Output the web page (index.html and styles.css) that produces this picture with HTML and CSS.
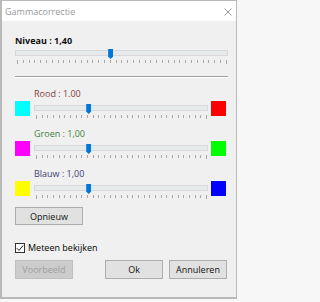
FILE: index.html
```html
<!DOCTYPE html>
<html lang="nl">
<head>
<meta charset="utf-8">
<title>Gammacorrectie</title>
<link rel="stylesheet" href="styles.css">
</head>
<body>
<div class="window">
  <div class="titlebar">
    <span class="title">Gammacorrectie</span>
    <svg class="close" width="8" height="8" viewBox="0 0 8 8"><path d="M0.5 0.5L7.5 7.5M7.5 0.5L0.5 7.5" stroke="#8c8c8c" stroke-width="0.9" fill="none"/></svg>
  </div>
  <div class="content">
    <div class="level">Niveau : 1,40</div>
    <div class="slider slider-main" style="--pos: 0.448">
      <div class="track"></div>
      <div class="ticks"></div>
      <div class="thumb"></div>
    </div>
    <div class="sep"></div>
    <div class="channels">
      <div class="channel">
        <div class="ch-label rood">Rood : 1.00</div>
        <div class="ch-row">
          <span class="swatch cyan"></span>
          <div class="slider slider-ch" style="--pos: 0.310">
            <div class="track"></div>
            <div class="ticks"></div>
            <div class="thumb"></div>
          </div>
          <span class="swatch red"></span>
        </div>
      </div>
      <div class="channel">
        <div class="ch-label groen">Groen : 1,00</div>
        <div class="ch-row">
          <span class="swatch magenta"></span>
          <div class="slider slider-ch" style="--pos: 0.310">
            <div class="track"></div>
            <div class="ticks"></div>
            <div class="thumb"></div>
          </div>
          <span class="swatch green"></span>
        </div>
      </div>
      <div class="channel">
        <div class="ch-label blauw">Blauw : 1,00</div>
        <div class="ch-row">
          <span class="swatch yellow"></span>
          <div class="slider slider-ch" style="--pos: 0.310">
            <div class="track"></div>
            <div class="ticks"></div>
            <div class="thumb"></div>
          </div>
          <span class="swatch blue"></span>
        </div>
      </div>
    </div>
    <button class="btn btn-reset">Opnieuw</button>
    <label class="check-row">
      <span class="checkbox"><svg width="8" height="8" viewBox="0 0 8 8"><path d="M0.8 4.2L3 6.4L7.2 1.4" stroke="#222" stroke-width="1" fill="none"/></svg></span>
      <span>Meteen bekijken</span>
    </label>
    <div class="actions">
      <button class="btn btn-preview" disabled>Voorbeeld</button>
      <button class="btn">Ok</button>
      <button class="btn">Annuleren</button>
    </div>
  </div>
</div>
</body>
</html>
```
FILE: styles.css
```css
* { box-sizing: border-box; }
html, body { margin: 0; padding: 0; }
body {
  width: 240px;
  height: 302px;
  overflow: hidden;
  background: #f7f7f7;
  font-family: "Open Sans", "Noto Sans", sans-serif;
  font-size: 9px;
  color: #000;
}
.window {
  width: 237px;
  height: 299px;
  border: 1px solid #b9b9b9;
  border-left-width: 2px;
  border-bottom-width: 2px;
  background: #f0f0f0;
  display: flex;
  flex-direction: column;
}
.titlebar {
  height: 20px;
  flex: none;
  background: #fff;
  display: flex;
  align-items: center;
  justify-content: space-between;
  padding: 1px 4px 0 3px;
}
.title { color: #999; line-height: 12px; }
.close { display: block; }
.content {
  flex: 1;
  display: flex;
  flex-direction: column;
  padding: 14px 9px 0 13px;
}
.level { font-weight: 700; line-height: 12px; height: 12px; color: #111; }
.slider { position: relative; height: 16px; }
.slider-main { margin: 2px -1px 0 0; --step: 5.8px; }
.track {
  position: absolute;
  left: 0; right: 0; top: 1px;
  height: 6px;
  background: #e7eaea;
  border: 1px solid #d8d8d8;
}
.ticks {
  position: absolute;
  left: 2px; right: 1px; top: 11px;
  height: 3px;
  background: repeating-linear-gradient(to right, #a8a8a8 0 1px, transparent 1px var(--step));
}
.ticks::before, .ticks::after {
  content: "";
  position: absolute;
  top: 0;
  width: 1px;
  height: 4px;
  background: #a8a8a8;
}
.ticks::before { left: 0; }
.ticks::after { right: 0; }
.thumb {
  position: absolute;
  top: 0;
  width: 5px;
  height: 10px;
  left: calc(2px + var(--pos) * (100% - 4px) - 2.5px);
  background: #0078d7;
  clip-path: polygon(0 0, 100% 0, 100% 75%, 50% 100%, 0 75%);
}
.sep {
  margin: 11px -1px 0 0;
  height: 2px;
  border-top: 1px solid #a0a0a0;
  border-bottom: 1px solid #fff;
}
.channels {
  margin-top: 10px;
  display: flex;
  flex-direction: column;
  gap: 8px;
}
.ch-label { line-height: 12px; height: 12px; padding-left: 19px; }
.rood { color: #804040; }
.groen { color: #408040; }
.blauw { color: #404070; }
.ch-row {
  display: flex;
  align-items: flex-start;
  margin: 1px 1px 0 0;
  height: 19px;
}
.swatch { width: 15px; height: 15px; flex: none; }
.slider-ch { flex: 1; margin: 3px 3px 0 4px; --step: 5.667px; }
.cyan { background: #00ffff; }
.red { background: #ff0000; }
.magenta { background: #ff00ff; }
.green { background: #00ff00; }
.yellow { background: #ffff00; }
.blue { background: #0000ff; }
.btn {
  font: inherit;
  font-size: 9px;
  color: #111;
  background: #e1e1e1;
  border: 1px solid #adadad;
  padding: 0;
  margin: 0;
  line-height: 1;
}
.btn-reset {
  margin-top: 7px;
  align-self: flex-start;
  width: 68px;
  height: 18px;
}
.check-row {
  margin-top: 17px;
  height: 12px;
  display: flex;
  align-items: center;
  gap: 3px;
  line-height: 12px;
}
.checkbox {
  width: 10px;
  height: 10px;
  border: 1px solid #333;
  background: #fff;
  display: flex;
  align-items: center;
  justify-content: center;
}
.checkbox svg { display: block; }
.actions {
  margin-top: 6px;
  display: flex;
  gap: 6px;
}
.actions .btn { width: 58px; height: 19px; }
.btn-preview {
  margin-right: auto;
  background: #cccccc;
  border-color: #bfbfbf;
  color: #a0a0a0;
}
```
